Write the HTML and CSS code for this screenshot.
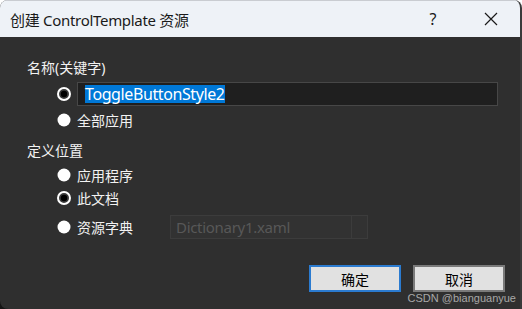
FILE: index.html
```html
<!DOCTYPE html>
<html lang="zh-CN">
<head>
    <meta charset="UTF-8">
    <title>创建 ControlTemplate 资源</title>
    <link rel="stylesheet" href="styles.css">
</head>
<body>
    <div class="window">
        <div class="titlebar">
            <span class="title">创建 ControlTemplate 资源</span>
            <div class="caption-buttons">
                <span class="caption-btn help">?</span>
                <span class="caption-btn close">
                    <svg width="14" height="14" viewBox="0 0 14 14"><path d="M1 1 L13 13 M13 1 L1 13" stroke="#1a1a1a" stroke-width="1.2" fill="none"/></svg>
                </span>
            </div>
        </div>

        <div class="content">
            <div class="group-label first">名称(关键字)</div>
            <div class="option tall">
                <svg class="radio" width="14" height="14" viewBox="0 0 14 14"><circle cx="7" cy="7" r="6" fill="#3a3a3a" stroke="#fff" stroke-width="2"/><circle cx="7" cy="7" r="3.2" fill="#000"/></svg>
                <div class="name-box"><span class="selected-text">ToggleButtonStyle2</span></div>
            </div>
            <div class="option tall">
                <svg class="radio" width="14" height="14" viewBox="0 0 14 14"><circle cx="7" cy="7" r="6.5" fill="#fff"/></svg>
                <span>全部应用</span>
            </div>

            <div class="group-label second">定义位置</div>
            <div class="option">
                <svg class="radio" width="14" height="14" viewBox="0 0 14 14"><circle cx="7" cy="7" r="6.5" fill="#fff"/></svg>
                <span>应用程序</span>
            </div>
            <div class="option">
                <svg class="radio" width="14" height="14" viewBox="0 0 14 14"><circle cx="7" cy="7" r="6" fill="#3a3a3a" stroke="#fff" stroke-width="2"/><circle cx="7" cy="7" r="3.2" fill="#000"/></svg>
                <span>此文档</span>
            </div>
            <div class="option dict-row">
                <svg class="radio" width="14" height="14" viewBox="0 0 14 14"><circle cx="7" cy="7" r="6.5" fill="#fff"/></svg>
                <span class="dict-label">资源字典</span>
                <div class="combo">
                    <span class="combo-text">Dictionary1.xaml</span>
                    <span class="combo-arrow"></span>
                </div>
            </div>

            <div class="buttons">
                <button class="btn default">确定</button>
                <button class="btn">取消</button>
            </div>
        </div>

        <span class="watermark">CSDN @bianguanyue</span>
    </div>
</body>
</html>
```

FILE: styles.css
```css
html, body {
    margin: 0;
    padding: 0;
}
body {
    width: 522px;
    height: 309px;
    overflow: hidden;
    background: linear-gradient(#ffffff 50%, #151515 50%);
    font-family: "Noto Sans", "Noto Sans CJK SC", sans-serif;
}
.window {
    position: relative;
    width: 520px;
    height: 309px;
    background-color: #2f2f2f;
    border-radius: 8px 8px 0 8px;
    border-right: 2px solid #3a3a3a;
    overflow: hidden;
}
.titlebar {
    height: 36px;
    border-top: 1px solid #c9ccd1;
    background-color: #eef2f7;
    display: flex;
    align-items: center;
    justify-content: space-between;
    padding-left: 10px;
}
.title {
    font-size: 15px;
    color: #1a1a1a;
    letter-spacing: -0.3px;
}
.caption-buttons {
    display: flex;
    height: 100%;
}
.caption-btn {
    width: 58px;
    display: flex;
    align-items: center;
    justify-content: center;
    color: #1a1a1a;
}
.help {
    font-size: 16px;
}
.content {
    padding-left: 27px;
    color: #f2f2f2;
    font-size: 14px;
}
.group-label {
    height: 20px;
    line-height: 20px;
}
.group-label.first {
    margin-top: 21px;
    margin-bottom: 4px;
}
.group-label.second {
    margin-top: 9px;
    margin-bottom: 2px;
}
.option {
    display: flex;
    align-items: center;
    height: 23px;
    padding-left: 30px;
    gap: 6px;
}
.option.tall {
    height: 24px;
    margin-bottom: 2px;
}
.radio {
    flex: none;
}
.name-box {
    width: 412px;
    height: 22px;
    background-color: #1f1f1f;
    border: 1px solid #474747;
    display: flex;
    align-items: center;
    padding-left: 7px;
}
.selected-text {
    background-color: #0078d7;
    color: #fff;
    font-size: 16px;
    line-height: 18px;
    letter-spacing: -0.4px;
}
.dict-row {
    height: 24px;
    margin-top: 6px;
}
.dict-label {
    width: 87px;
}
.combo {
    width: 196px;
    height: 22px;
    border: 1px solid #3c3c3c;
    background-color: #323232;
    display: flex;
    align-items: center;
}
.combo-text {
    flex: 1;
    padding-left: 5px;
    color: #585858;
    font-size: 15px;
    letter-spacing: -0.3px;
}
.combo-arrow {
    width: 15px;
    height: 100%;
    border-left: 1px solid #3c3c3c;
}
.buttons {
    display: flex;
    justify-content: flex-end;
    gap: 12px;
    margin-top: 26px;
    padding-right: 15px;
}
.btn {
    width: 92px;
    height: 27px;
    background-color: #e1e1e1;
    border: 2px solid #7a7a7a;
    font-family: "Noto Sans CJK SC", sans-serif;
    font-size: 14px;
    color: #000;
    padding: 0;
}
.btn.default {
    border-color: #2b7bd0;
}
.watermark {
    position: absolute;
    right: 4px;
    bottom: 5px;
    font-size: 11px;
    color: #a8a8a8;
    font-family: "Liberation Sans", sans-serif;
}
```
